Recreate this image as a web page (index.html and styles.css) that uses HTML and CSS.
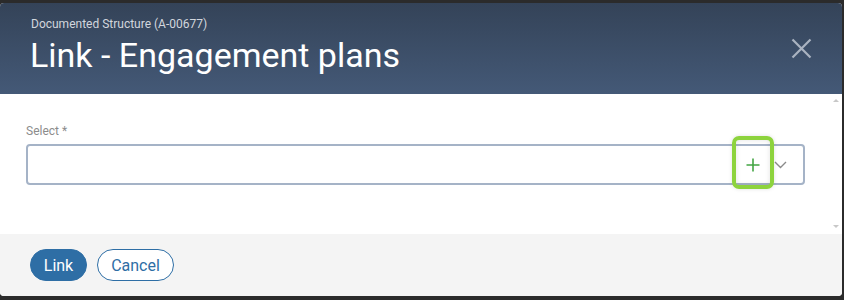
FILE: index.html
```html
<!DOCTYPE html>
<html>
<head>
<meta charset="utf-8">
<link rel="stylesheet" href="styles.css">
</head>
<body>
<div class="dialog">
  <header class="dlg-header">
    <div class="titles">
      <div class="subtitle">Documented Structure (A-00677)</div>
      <h1 class="title">Link - Engagement plans</h1>
    </div>
    <button class="close" aria-label="Close">
      <svg width="21" height="21" viewBox="0 0 21 21"><path d="M1.5 1.5 L19.5 19.5 M19.5 1.5 L1.5 19.5" stroke="#aab3c1" stroke-width="2.2" fill="none"/></svg>
    </button>
  </header>
  <div class="dlg-body">
    <div class="content">
      <label class="field-label">Select *</label>
      <div class="select">
        <div class="select-value"></div>
        <button class="add-btn" aria-label="Add">
          <svg width="14" height="14" viewBox="0 0 14 14"><path d="M7 0.5 V13.5 M0.5 7 H13.5" stroke="#43a543" stroke-width="1.6" fill="none"/></svg>
        </button>
        <button class="caret-btn" aria-label="Open">
          <svg width="13" height="8" viewBox="0 0 13 8"><path d="M1 1 L6.5 6.5 L12 1" stroke="#8a8a8a" stroke-width="1.4" fill="none"/></svg>
        </button>
      </div>
    </div>
    <div class="scrollbar">
      <span class="arrow up"></span>
      <span class="arrow down"></span>
    </div>
  </div>
  <footer class="dlg-footer">
    <button class="btn primary">Link</button>
    <button class="btn secondary">Cancel</button>
  </footer>
</div>
</body>
</html>
```

FILE: styles.css
```css
html, body {
  margin: 0;
  padding: 0;
  background: #2b2b2b;
  font-family: Roboto, "Liberation Sans", Arial, sans-serif;
}
body {
  padding-top: 3px;
  height: 300px;
  box-sizing: border-box;
}
.dialog {
  width: 842px;
  height: 293px;
  display: flex;
  flex-direction: column;
  border-radius: 4px;
  overflow: hidden;
  background: #fff;
}
.dlg-header {
  height: 91px;
  box-sizing: border-box;
  background: linear-gradient(#344358, #445977);
  display: flex;
  align-items: flex-start;
  padding: 14px 30px 0 31px;
}
.titles {
  flex: 1;
}
.subtitle {
  font-size: 12px;
  line-height: 14px;
  color: #d2d6dd;
}
.title {
  margin: 4px 0 0 -1px;
  font-size: 34px;
  line-height: 40px;
  font-weight: 400;
  color: #ffffff;
}
.close {
  margin-top: 21px;
  padding: 0;
  border: 0;
  background: none;
  width: 21px;
  height: 21px;
  display: flex;
}
.dlg-body {
  height: 140px;
  display: flex;
}
.content {
  flex: 1;
  padding: 30px 25px 0 26px;
}
.field-label {
  display: block;
  font-size: 12px;
  line-height: 14px;
  color: #8c8c8c;
}
.select {
  margin-top: 6px;
  height: 41px;
  box-sizing: border-box;
  border: 2px solid #a5b3c7;
  border-radius: 4px;
  display: flex;
  align-items: stretch;
  padding-right: 13px;
}
.select-value {
  flex: 1;
}
.add-btn, .caret-btn {
  border: 0;
  padding: 0;
  background: none;
  display: flex;
  align-items: center;
  justify-content: center;
}
.add-btn {
  width: 36px;
  position: relative;
  left: 1px;
}
.add-btn::after {
  content: "";
  position: absolute;
  left: -3px;
  top: -10px;
  width: 42px;
  height: 53px;
  box-sizing: border-box;
  border: 4px solid #8dd33d;
  border-radius: 7px;
  box-shadow: inset 0 0 5px rgba(0, 0, 0, 0.12), 0 0 4px rgba(0, 0, 0, 0.12);
}
.caret-btn {
  width: 20px;
  padding-top: 1px;
}
.scrollbar {
  width: 12px;
  display: flex;
  flex-direction: column;
  justify-content: space-between;
  align-items: center;
  padding: 5px 0 6px;
  box-sizing: border-box;
}
.arrow {
  width: 0;
  height: 0;
  border-left: 3px solid transparent;
  border-right: 3px solid transparent;
}
.arrow.up {
  border-bottom: 3px solid #c8c8c8;
}
.arrow.down {
  border-top: 3px solid #c8c8c8;
}
.dlg-footer {
  flex: 1;
  background: #f4f4f4;
  display: flex;
  align-items: flex-start;
  gap: 10px;
  padding: 15px 0 0 30px;
}
.btn {
  height: 32px;
  border-radius: 16px;
  font-family: Roboto, "Liberation Sans", Arial, sans-serif;
  font-size: 16px;
  padding: 0 12px;
  box-sizing: border-box;
  cursor: pointer;
}
.btn.primary {
  background: #2e6ea5;
  border: 1px solid #2e6ea5;
  color: #ffffff;
  width: 57px;
}
.btn.secondary {
  background: #ffffff;
  border: 1px solid #2e6ea5;
  color: #2e6ea5;
  width: 77px;
}
```
